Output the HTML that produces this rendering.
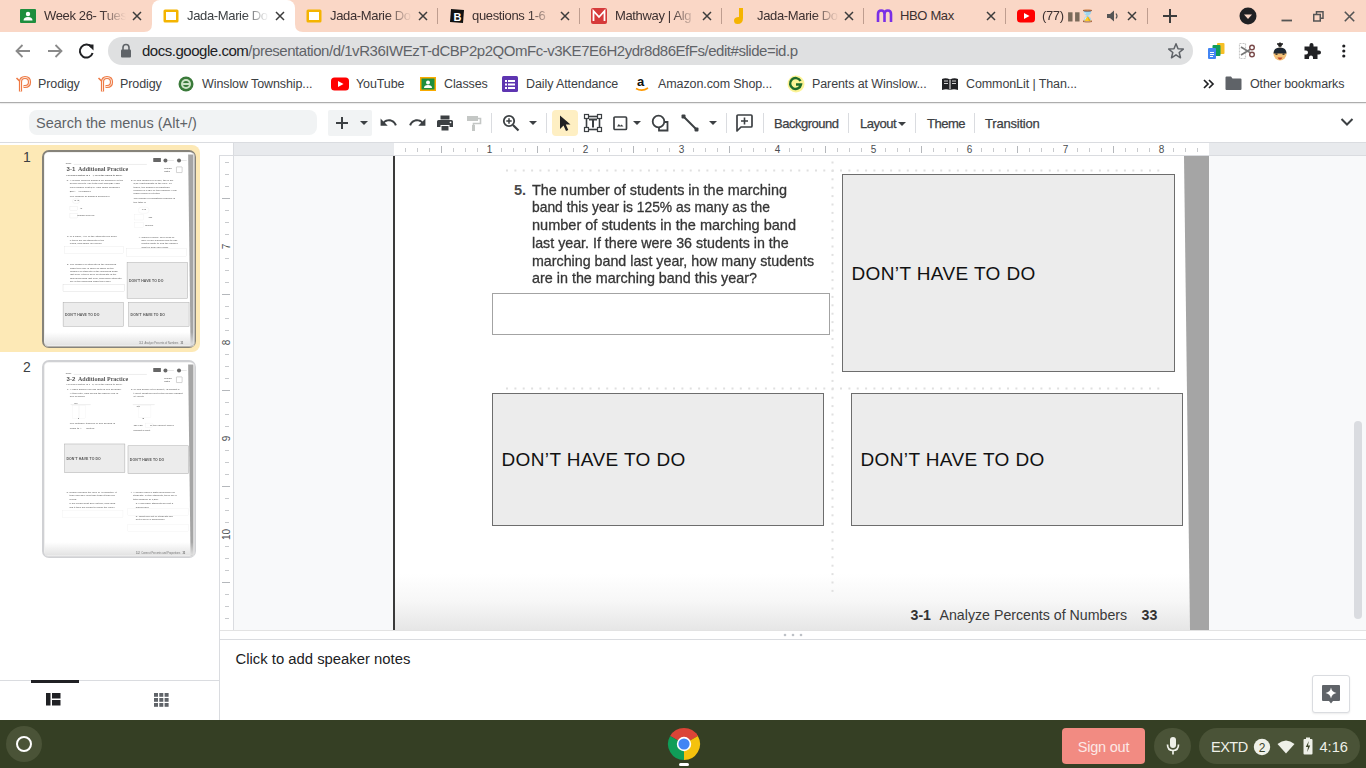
<!DOCTYPE html>
<html><head><meta charset="utf-8">
<style>
*{box-sizing:border-box;margin:0;padding:0}
html,body{width:1366px;height:768px;overflow:hidden;background:#fff;font-family:"Liberation Sans",sans-serif;position:relative}
.a{position:absolute}
svg{position:absolute;overflow:visible}
/* tab strip */
#tabs{left:0;top:0;width:1366px;height:32px;background:#fad7c6}
.tab{position:absolute;top:0;height:32px;width:143px}
.tab .t{position:absolute;left:35px;top:8px;font-size:13px;color:#3c3030;white-space:nowrap;width:82px;overflow:hidden;letter-spacing:-0.35px;
 -webkit-mask-image:linear-gradient(90deg,#000 70%,rgba(0,0,0,.35) 88%,transparent 100%)}
.tab .x{position:absolute;left:121px;top:10px;width:12px;height:12px}
.sep{position:absolute;top:10px;width:1px;height:18px;background:#8d6e63;opacity:.55}
#atab{left:152px;top:0;width:143px;height:32px;background:#fff;border-radius:8px 8px 0 0}
/* toolbar */
#omni{left:108px;top:37px;width:1085px;height:28px;border-radius:14px;background:#dfe0e1}
#url{left:142px;top:42px;font-size:15px;color:#5f6368;white-space:nowrap;letter-spacing:-0.47px}
#url b{font-weight:normal;color:#202124}
.bm{position:absolute;top:77px;font-size:12.5px;color:#3c4043;white-space:nowrap;letter-spacing:-0.1px}
#bmline{left:0;top:102px;width:1366px;height:1px;background:#adadad;box-shadow:0 1px 1px #e8e8e8}
/* docs toolbar */
#search{left:29px;top:110px;width:288px;height:25px;border-radius:8px;background:#f1f3f4}
#searcht{left:36px;top:115px;font-size:14.5px;color:#5f6368;white-space:nowrap}
.tbt{position:absolute;top:116px;font-size:13px;color:#3c4043;letter-spacing:-0.5px;white-space:nowrap;-webkit-text-stroke:0.25px #3c4043}
.vs{position:absolute;top:113px;width:1px;height:20px;background:#dadce0}
#tbline{left:0;top:142px;width:1366px;height:1px;background:#dadce0}
/* filmstrip */
#film{left:0;top:143px;width:219px;height:577px;background:#fff}
#filmr{left:219px;top:143px;width:1px;height:577px;background:#dadce0}
#hl{left:0;top:145px;width:200px;height:207px;background:#fde9b6;border-radius:0 8px 8px 0}
.num{position:absolute;font-size:14px;color:#3c4043}
.thumb{position:absolute;left:42px;width:154px;background:#fff;border-radius:5px;overflow:hidden}
/* canvas */
#canvas{left:220px;top:143px;width:1146px;height:488px;background:#f8f9fa}
#hruler{left:234px;top:143px;width:1132px;height:13px;background:#e8eaed;border-bottom:1px solid #dadce0}
#vruler{left:219px;top:156px;width:15px;height:475px;background:#fff;border-right:1px solid #dadce0;border-left:1px solid #dadce0}
#slide{left:394px;top:156px;width:815px;height:474px;background:#fff;overflow:hidden}
#notesline{left:220px;top:639px;width:1146px;height:1px;background:#dadce0}
#notes{left:235.5px;top:651px;font-size:14.85px;color:#202124;white-space:nowrap}
#shelf{left:0;top:720px;width:1366px;height:48px;background:#353f24}
.dhtd{position:absolute;background:#ececec;border:1.5px solid #6d6d6d;font-size:19px;color:#111;white-space:nowrap}
.dhtd span{position:absolute;left:8.5px;top:50%;transform:translateY(-50%);letter-spacing:0.38px}
.sl{font-size:14.6px;color:#363636;-webkit-text-stroke:0.3px #363636;white-space:nowrap;line-height:16px;transform-origin:left top}
.pf{font-family:"Liberation Sans",sans-serif;color:#333}
</style></head>
<body>
<!-- TAB STRIP -->
<div id="tabs" class="a"></div>
<div id="atab" class="a"></div>
<svg style="left:144px;top:24px" width="8" height="8"><path d="M0 8 Q8 8 8 0 L8 8 Z" fill="#fff"/></svg>
<svg style="left:295px;top:24px" width="8" height="8"><path d="M8 8 Q0 8 0 0 L0 8 Z" fill="#fff"/></svg>
<!-- tab1 classroom -->
<div class="tab" style="left:9px">
 <svg style="left:11px;top:9px" width="16" height="14"><rect x="0" y="0" width="16" height="14" rx="1" fill="#1e8e3e"/><circle cx="8" cy="5" r="2.2" fill="#fff"/><path d="M3.5 11.5 Q3.5 8 8 8 Q12.5 8 12.5 11.5Z" fill="#fff"/></svg>
 <div class="t">Week 26- Tues</div>
 <svg class="x" style="left:122px;top:10px" width="12" height="12"><path d="M2 2L10 10M10 2L2 10" stroke="#3c3c3c" stroke-width="1.5"/></svg>
</div>
<!-- tab2 active slides -->
<div class="tab" style="left:152px">
 <svg style="left:11px;top:8px" width="16" height="16"><rect x="0.5" y="1.5" width="15" height="13" rx="1.5" fill="#f4b400"/><rect x="3" y="4" width="10" height="8" fill="#fff"/></svg>
 <div class="t" style="color:#3c4043">Jada-Marie Do</div>
 <svg class="x" style="left:122px;top:10px" width="12" height="12"><path d="M2 2L10 10M10 2L2 10" stroke="#3c3c3c" stroke-width="1.5"/></svg>
</div>
<div class="tab" style="left:295px">
 <svg style="left:11px;top:8px" width="16" height="16"><rect x="0.5" y="1.5" width="15" height="13" rx="1.5" fill="#f4b400"/><rect x="3" y="4" width="10" height="8" fill="#fff"/></svg>
 <div class="t">Jada-Marie Do</div>
 <svg class="x" style="left:122px;top:10px" width="12" height="12"><path d="M2 2L10 10M10 2L2 10" stroke="#3c3c3c" stroke-width="1.5"/></svg>
</div>
<div class="sep" style="left:437px;top:8px;height:16px"></div>
<div class="tab" style="left:437px">
 <svg style="left:12px;top:8px" width="16" height="16"><path d="M2 1 L15 2 L14 15 L1 14Z" fill="#111"/><text x="4.5" y="12.5" font-family="Liberation Sans" font-weight="bold" font-size="11" fill="#fff">B</text></svg>
 <div class="t">questions 1-6</div>
 <svg class="x" style="left:122px;top:10px" width="12" height="12"><path d="M2 2L10 10M10 2L2 10" stroke="#3c3c3c" stroke-width="1.5"/></svg>
</div>
<div class="sep" style="left:579px;top:8px;height:16px"></div>
<div class="tab" style="left:580px">
 <svg style="left:11px;top:8px" width="16" height="16"><rect x="0" y="0" width="16" height="16" rx="2" fill="#d63a3a"/><path d="M2.5 13 L2.5 3 L8 9 L13.5 3 L13.5 13" stroke="#fff" stroke-width="1.8" fill="none"/></svg>
 <div class="t">Mathway | Alg</div>
 <svg class="x" style="left:121px;top:10px" width="12" height="12"><path d="M2 2L10 10M10 2L2 10" stroke="#3c3c3c" stroke-width="1.5"/></svg>
</div>
<div class="sep" style="left:721px;top:8px;height:16px"></div>
<div class="tab" style="left:722px">
 <svg style="left:11px;top:7px" width="16" height="18"><path d="M6 1 L10 1 L10 11 Q10 17 4.5 17 Q1 17 1 13.5 Q1 10 6 10 Z" fill="#f5b400"/></svg>
 <div class="t">Jada-Marie Do</div>
 <svg class="x" style="left:121px;top:10px" width="12" height="12"><path d="M2 2L10 10M10 2L2 10" stroke="#3c3c3c" stroke-width="1.5"/></svg>
</div>
<div class="sep" style="left:863px;top:8px;height:16px"></div>
<div class="tab" style="left:865px">
 <svg style="left:11px;top:9px" width="18" height="14"><path d="M2 13 L2 5 Q2 1.5 5.2 1.5 Q8.5 1.5 8.5 5 L8.5 13 M8.5 5 Q8.5 1.5 11.8 1.5 Q15 1.5 15 5 L15 13" stroke="#7a2fe6" stroke-width="2.6" fill="none"/></svg>
 <div class="t" style="-webkit-mask-image:none">HBO Max</div>
 <svg class="x" style="left:120px;top:10px" width="12" height="12"><path d="M2 2L10 10M10 2L2 10" stroke="#3c3c3c" stroke-width="1.5"/></svg>
</div>
<div class="sep" style="left:1005px;top:8px;height:16px"></div>
<div class="tab" style="left:1007px">
 <svg style="left:10px;top:9px" width="18" height="14"><rect x="0" y="0.5" width="18" height="13" rx="3.5" fill="#f00"/><path d="M7 4 L12.5 7 L7 10Z" fill="#fff"/></svg>
 <div class="t" style="width:70px">(77) <span style="font-size:12px;color:#7a6a5a">&#9646;&#9646;&#8987;</span></div>
 <svg style="left:99px;top:10px" width="14" height="12"><path d="M1 4 L4 4 L8 0.5 L8 11.5 L4 8 L1 8Z" fill="#555"/><path d="M10 3.5 Q12 6 10 8.5" stroke="#555" stroke-width="1.2" fill="none"/></svg>
 <svg class="x" style="left:119px;top:10px" width="12" height="12"><path d="M2 2L10 10M10 2L2 10" stroke="#3c3c3c" stroke-width="1.5"/></svg>
</div>
<div class="sep" style="left:1147px;top:8px;height:16px"></div>
<svg style="left:1162px;top:8px" width="16" height="16"><path d="M8 1 L8 15 M1 8 L15 8" stroke="#3c3c3c" stroke-width="2"/></svg>
<svg style="left:1239px;top:7px" width="18" height="18"><circle cx="9" cy="9" r="8.5" fill="#202124"/><path d="M5 7.5 L13 7.5 L9 12Z" fill="#fad7c6"/></svg>
<svg style="left:1281px;top:8px" width="12" height="16"><path d="M0.5 12.5 L11 12.5" stroke="#555" stroke-width="1.8"/></svg>
<svg style="left:1313px;top:11px" width="11" height="11"><rect x="3.5" y="0.75" width="6.5" height="6.5" stroke="#555" stroke-width="1.5" fill="none"/><rect x="0.75" y="3.5" width="6.5" height="6.5" stroke="#555" stroke-width="1.5" fill="#fad7c6"/></svg>
<svg style="left:1344px;top:11px" width="11" height="11"><path d="M0.8 0.8L10.2 10.2M10.2 0.8L0.8 10.2" stroke="#555" stroke-width="1.6"/></svg>

<!-- address -->
<div id="omni" class="a"></div>
<div id="url" class="a"><b>docs.google.com</b>/presentation/d/1vR36IWEzT-dCBP2p2QOmFc-v3KE7E6H2ydr8d86EfFs/edit#slide=id.p</div>
<div id="bmline" class="a"></div>
<!-- NAV -->
<svg style="left:14px;top:42px" width="18" height="18"><path d="M16 9 L2.5 9 M8.5 3 L2.5 9 L8.5 15" stroke="#8a8a8a" stroke-width="1.8" fill="none"/></svg>
<svg style="left:46px;top:42px" width="18" height="18"><path d="M2 9 L15.5 9 M9.5 3 L15.5 9 L9.5 15" stroke="#8a8a8a" stroke-width="1.8" fill="none"/></svg>
<svg style="left:78px;top:43px" width="17" height="17"><path d="M13.6 4.2 A6.5 6.5 0 1 0 14.6 10" stroke="#202124" stroke-width="2" fill="none"/><path d="M9.5 1.5 L15.5 1.5 L15.5 7.5Z" fill="#202124"/></svg>
<svg style="left:120px;top:43px" width="12" height="15"><path d="M3 7 L3 4.5 Q3 1.5 6 1.5 Q9 1.5 9 4.5 L9 7" stroke="#5f6368" stroke-width="1.6" fill="none"/><rect x="1" y="6.5" width="10" height="8" rx="1" fill="#5f6368"/></svg>
<svg style="left:1167px;top:42px" width="18" height="18"><path d="M9 1.8 L11 6.8 L16.3 7.1 L12.2 10.5 L13.5 15.8 L9 12.8 L4.5 15.8 L5.8 10.5 L1.7 7.1 L7 6.8Z" stroke="#5f6368" stroke-width="1.5" fill="none" stroke-linejoin="round"/></svg>
<!-- extensions -->
<svg style="left:1206px;top:41px" width="20" height="20"><rect x="11" y="2" width="7.5" height="11" rx="1" fill="#f6bf26"/><rect x="6.5" y="4" width="8" height="11" rx="1" fill="#0f9d58"/><rect x="2" y="7" width="8" height="11" rx="1" fill="#4285f4"/><path d="M4 11.5h4M4 13.5h4M4 15.5h3" stroke="#fff" stroke-width="1"/></svg>
<svg style="left:1238px;top:42px" width="18" height="18"><rect x="1.5" y="1.5" width="6" height="15" fill="none" stroke="#c8c8c8" stroke-width="1.2" stroke-dasharray="2 1"/><path d="M3 5 L12 10.5 M3 13 L12 7.5" stroke="#777" stroke-width="1.6"/><circle cx="14" cy="5.5" r="2.3" fill="none" stroke="#7a4a4a" stroke-width="1.4"/><circle cx="14" cy="12.5" r="2.3" fill="none" stroke="#7a4a4a" stroke-width="1.4"/></svg>
<svg style="left:1271px;top:41px" width="18" height="20"><path d="M6 3 L12 3 M9 1.5 L9 5" stroke="#222" stroke-width="1.6"/><circle cx="9" cy="4" r="2" fill="#222"/><circle cx="9" cy="13" r="6.5" fill="#f2c078"/><path d="M2.5 12.5 Q2.5 6.5 9 6.5 Q15.5 6.5 15.5 12.5Z" fill="#1d2733"/><rect x="4.5" y="12.5" width="2" height="1.3" fill="#222"/><rect x="11.5" y="12.5" width="2" height="1.3" fill="#222"/><path d="M6.5 16.5 L11.5 16.5 L10 18.5 L8 18.5Z" fill="#c0452a"/></svg>
<svg style="left:1303px;top:42px" width="18" height="18"><path d="M6.5 3 Q6.5 1 8.5 1 Q10.5 1 10.5 3 L10.5 4.5 L14.5 4.5 L14.5 8.5 L16 8.5 Q18 8.5 18 10.5 Q18 12.5 16 12.5 L14.5 12.5 L14.5 17 L10 17 L10 15.5 Q10 13.5 8 13.5 Q6 13.5 6 15.5 L6 17 L1.5 17 L1.5 12.5 L3 12.5 Q5 12.5 5 10.5 Q5 8.5 3 8.5 L1.5 8.5 L1.5 4.5 L6.5 4.5Z" fill="#202124"/></svg>
<svg style="left:1340px;top:43px" width="8" height="18"><circle cx="3.8" cy="3" r="1.6" fill="#202124"/><circle cx="3.8" cy="8" r="1.6" fill="#202124"/><circle cx="3.8" cy="13" r="1.6" fill="#202124"/></svg>
<!-- BOOKMARKS -->
<svg style="left:14px;top:75px" width="18" height="18"><path d="M2.5 3 L6 6.5" stroke="#ee7a45" stroke-width="1.6"/><path d="M6.5 16.5 L6.5 7 Q6.5 2.5 11 2.5 Q15.5 2.5 15.5 7 Q15.5 11.5 11 11.5 L9.5 11.5" stroke="#ee7a45" stroke-width="3.2" fill="none"/><path d="M6.5 16.5 L6.5 7 Q6.5 2.5 11 2.5 Q15.5 2.5 15.5 7 Q15.5 11.5 11 11.5 L9.5 11.5" stroke="#fde8dc" stroke-width="1" fill="none"/></svg>
<div class="bm" style="left:38px">Prodigy</div>
<svg style="left:96px;top:75px" width="18" height="18"><path d="M2.5 3 L6 6.5" stroke="#ee7a45" stroke-width="1.6"/><path d="M6.5 16.5 L6.5 7 Q6.5 2.5 11 2.5 Q15.5 2.5 15.5 7 Q15.5 11.5 11 11.5 L9.5 11.5" stroke="#ee7a45" stroke-width="3.2" fill="none"/><path d="M6.5 16.5 L6.5 7 Q6.5 2.5 11 2.5 Q15.5 2.5 15.5 7 Q15.5 11.5 11 11.5 L9.5 11.5" stroke="#fde8dc" stroke-width="1" fill="none"/></svg>
<div class="bm" style="left:120px">Prodigy</div>
<svg style="left:178px;top:76px" width="16" height="16"><circle cx="8" cy="8" r="7.5" fill="#3a7a3a"/><circle cx="8" cy="8" r="5" fill="#cfe3c8"/><circle cx="8" cy="8" r="3" fill="#3a7a3a"/><rect x="4" y="7" width="8" height="2" fill="#cfe3c8"/></svg>
<div class="bm" style="left:202px">Winslow Township...</div>
<svg style="left:331px;top:77px" width="18" height="14"><rect x="0" y="0.5" width="18" height="13" rx="3.5" fill="#f00"/><path d="M7 4 L12.5 7 L7 10Z" fill="#fff"/></svg>
<div class="bm" style="left:356px">YouTube</div>
<svg style="left:420px;top:77px" width="16" height="14"><rect x="0" y="0" width="16" height="14" fill="#f9ab00"/><rect x="1.5" y="1.5" width="13" height="11" fill="#1e8e3e"/><circle cx="8" cy="5.5" r="2" fill="#fff"/><path d="M4 11 Q4 8 8 8 Q12 8 12 11Z" fill="#fff"/></svg>
<div class="bm" style="left:444px">Classes</div>
<svg style="left:502px;top:76px" width="16" height="16"><rect x="0" y="0" width="16" height="16" rx="1.5" fill="#5e35b1"/><rect x="3" y="4" width="2" height="2" fill="#fff"/><rect x="6" y="4" width="7" height="2" fill="#fff"/><rect x="3" y="7.5" width="2" height="2" fill="#fff"/><rect x="6" y="7.5" width="7" height="2" fill="#fff"/><rect x="3" y="11" width="2" height="2" fill="#fff"/><rect x="6" y="11" width="7" height="2" fill="#fff"/></svg>
<div class="bm" style="left:526px">Daily Attendance</div>
<svg style="left:634px;top:75px" width="16" height="18"><text x="3" y="11" font-family="Liberation Sans" font-weight="bold" font-size="13" fill="#111">a</text><path d="M2 13.5 Q8 17 14 13" stroke="#f90" stroke-width="1.6" fill="none"/></svg>
<div class="bm" style="left:658px">Amazon.com Shop...</div>
<svg style="left:787px;top:75px" width="18" height="18"><circle cx="9" cy="9" r="8.5" fill="#fbf07a" opacity=".8"/><path d="M13.5 6 A5.5 5.5 0 1 0 14 9.5 L9 9.5" stroke="#1e6b2a" stroke-width="2.4" fill="none"/></svg>
<div class="bm" style="left:812px">Parents at Winslow...</div>
<svg style="left:941px;top:77px" width="18" height="14"><path d="M1 2 Q5 0.5 9 2.5 Q13 0.5 17 2 L17 13 Q13 11.5 9 13 Q5 11.5 1 13Z" fill="#202124"/><path d="M9 3 L9 12.5" stroke="#fff" stroke-width="1"/><path d="M3 4 L7 4 M3 6.5 L7 6.5 M11 4 L15 4 M11 6.5 L15 6.5" stroke="#fff" stroke-width=".8"/></svg>
<div class="bm" style="left:966px">CommonLit | Than...</div>
<svg style="left:1203px;top:79px" width="12" height="10"><path d="M1 1 L5 5 L1 9 M6 1 L10 5 L6 9" stroke="#202124" stroke-width="1.7" fill="none"/></svg>
<svg style="left:1225px;top:76px" width="17" height="14"><path d="M0.5 1.5 Q0.5 0.5 1.5 0.5 L6 0.5 L7.5 2.5 L15.5 2.5 Q16.5 2.5 16.5 3.5 L16.5 13 Q16.5 14 15.5 14 L1.5 14 Q0.5 14 0.5 13Z" fill="#5f6368"/></svg>
<div class="bm" style="left:1250px">Other bookmarks</div>

<!-- docs toolbar -->
<div id="search" class="a"></div>
<div id="searcht" class="a">Search the menus (Alt+/)</div>
<div id="tbline" class="a"></div>
<!-- DOCS TOOLBAR -->
<div class="a" style="left:328px;top:110px;width:44px;height:26px;background:#f1f3f4;border-radius:2px"></div>
<svg style="left:335px;top:116px" width="14" height="14"><path d="M7 1 L7 13 M1 7 L13 7" stroke="#3c4043" stroke-width="2"/></svg>
<svg style="left:360px;top:121px" width="8" height="5"><path d="M0 0 L8 0 L4 4Z" fill="#3c4043"/></svg>
<svg style="left:378.8px;top:112.6px;width:19px;height:19px" viewBox="0 0 24 24"><path d="M12.5 8c-2.65 0-5.050.99-6.9 2.6L2 7v9h9l-3.62-3.620c1.39-1.160 3.16-1.880 5.12-1.880 3.54 0 6.550 2.310 7.6 5.5l2.37-.78C21.080 11.030 17.150 8 12.5 8z" fill="#3c4043"/></svg>
<svg style="left:408.2px;top:112.6px;width:19px;height:19px" viewBox="0 0 24 24"><path d="M18.4 10.6C16.55 8.99 14.15 8 11.5 8c-4.65 0-8.58 3.03-9.96 7.22L3.9 16c1.05-3.19 4.05-5.5 7.6-5.5 1.95 0 3.73.72 5.12 1.88L13 16h9V7l-3.6 3.6z" fill="#3c4043"/></svg>
<svg style="left:436px;top:114px" width="18" height="18"><rect x="4.5" y="1.5" width="9" height="4" fill="#3c4043"/><path d="M1 7.5 Q1 6 2.5 6 L15.5 6 Q17 6 17 7.5 L17 13 L13.5 13 L13.5 11 L4.5 11 L4.5 13 L1 13Z" fill="#3c4043"/><rect x="5.5" y="12" width="7" height="4.5" fill="#3c4043"/><circle cx="14.5" cy="8.3" r=".9" fill="#fff"/></svg>
<svg style="left:466px;top:115px" width="16" height="17"><rect x="1" y="1" width="11" height="5" fill="#c4c7c5"/><path d="M12 3.5 L14.5 3.5 L14.5 8.5 L7.5 8.5 L7.5 10" stroke="#c4c7c5" stroke-width="1.6" fill="none"/><rect x="6" y="10" width="3" height="6" fill="#c4c7c5"/></svg>
<div class="vs" style="left:491px"></div>
<svg style="left:502px;top:114px" width="18" height="18"><circle cx="7" cy="7" r="5.2" stroke="#3c4043" stroke-width="1.8" fill="none"/><path d="M11 11 L16.5 16.5" stroke="#3c4043" stroke-width="2.2"/><path d="M7 4.3 L7 9.7 M4.3 7 L9.7 7" stroke="#3c4043" stroke-width="1.5"/></svg>
<svg style="left:529px;top:121px" width="8" height="5"><path d="M0 0 L8 0 L4 4Z" fill="#3c4043"/></svg>
<div class="vs" style="left:546px"></div>
<div class="a" style="left:552px;top:110px;width:26px;height:26px;background:#feefc3;border-radius:4px"></div>
<svg style="left:558px;top:114px" width="14" height="18"><path d="M2 1.5 L2 15 L5.5 11.5 L8 17 L10.3 16 L7.8 10.5 L12.5 10.5Z" fill="#202124"/></svg>
<svg style="left:584px;top:114px" width="18" height="18"><rect x="2.5" y="2.5" width="13" height="13" stroke="#3c4043" stroke-width="1.6" fill="none"/><rect x="0.5" y="0.5" width="4" height="4" fill="#fff" stroke="#3c4043" stroke-width="1.2"/><rect x="13.5" y="0.5" width="4" height="4" fill="#fff" stroke="#3c4043" stroke-width="1.2"/><rect x="0.5" y="13.5" width="4" height="4" fill="#fff" stroke="#3c4043" stroke-width="1.2"/><rect x="13.5" y="13.5" width="4" height="4" fill="#fff" stroke="#3c4043" stroke-width="1.2"/><path d="M5 5.5 L13 5.5 M9 5.5 L9 13.5" stroke="#3c4043" stroke-width="2"/></svg>
<svg style="left:613px;top:116px" width="15" height="15"><rect x="1" y="1" width="12.5" height="12.5" rx="1" stroke="#3c4043" stroke-width="1.7" fill="none"/><path d="M4 10.5 L5.8 8 L7.3 9.8 L8.5 8.5 L10.5 10.5Z" fill="#3c4043"/></svg>
<svg style="left:633px;top:121px" width="8" height="5"><path d="M0 0 L8 0 L4 4Z" fill="#3c4043"/></svg>
<svg style="left:651px;top:114px" width="18" height="18"><circle cx="7.5" cy="7.5" r="5.8" stroke="#3c4043" stroke-width="1.8" fill="none"/><path d="M13.5 8 L16.5 8 L16.5 16.5 L8 16.5 L8 13.5" stroke="#3c4043" stroke-width="1.8" fill="none"/></svg>
<svg style="left:681px;top:114px" width="18" height="18"><path d="M3 3 L15 15" stroke="#3c4043" stroke-width="2"/><rect x="0.5" y="0.5" width="4" height="4" rx="1" fill="#3c4043"/><rect x="13.5" y="13.5" width="4" height="4" rx="1" fill="#3c4043"/></svg>
<svg style="left:709px;top:121px" width="8" height="5"><path d="M0 0 L8 0 L4 4Z" fill="#3c4043"/></svg>
<div class="vs" style="left:726px"></div>
<svg style="left:736px;top:114px" width="17" height="18"><path d="M1 2 Q1 1 2 1 L15 1 Q16 1 16 2 L16 12 Q16 13 15 13 L5 13 L1 17Z" stroke="#3c4043" stroke-width="1.7" fill="none" stroke-linejoin="round"/><path d="M8.5 3.5 L8.5 10.5 M5 7 L12 7" stroke="#3c4043" stroke-width="1.6"/></svg>
<div class="vs" style="left:763px"></div>
<div class="tbt" style="left:774px">Background</div>
<div class="vs" style="left:848px"></div>
<div class="tbt" style="left:860px">Layout</div>
<svg style="left:898px;top:122px" width="8" height="5"><path d="M0 0 L8 0 L4 4Z" fill="#3c4043"/></svg>
<div class="vs" style="left:915px"></div>
<div class="tbt" style="left:927px">Theme</div>
<div class="vs" style="left:974px"></div>
<div class="tbt" style="left:985px;letter-spacing:-0.2px">Transition</div>
<svg style="left:1340px;top:117px" width="14" height="10"><path d="M1.5 2 L7 7.5 L12.5 2" stroke="#3c4043" stroke-width="2" fill="none"/></svg>

<!-- filmstrip -->
<div id="film" class="a"></div>
<div id="filmr" class="a"></div>
<div id="hl" class="a"></div>
<!-- THUMBS -->
<div class="num" style="left:23px;top:149px">1</div>
<div class="num" style="left:23px;top:359px">2</div>
<div class="a" style="left:41.5px;top:150px;width:154.5px;height:198px;border:2px solid #86837a;border-radius:7px;background:#fff"></div><div class="a" style="left:45px;top:152.5px;width:149px;height:193px;overflow:hidden;border-radius:3px;box-shadow:0 0 0 0.6px #e6e6e6;filter:blur(0.25px)"><div style="position:absolute;left:0;top:0;width:815px;height:1054px;background:#fff;transform:scale(0.18282);transform-origin:0 0;font-family:'Liberation Sans'"><div style="position:absolute;left:114px;top:50.4px;font-size:11px;line-height:11px;color:#777;white-space:nowrap;font-weight:bold;">Name</div><div style="position:absolute;left:157px;top:60px;width:400px;height:1.5px;background:#ccc"></div><div style="position:absolute;left:592px;top:27px;width:42px;height:22px;background:#666;border-radius:2px"></div><div style="position:absolute;left:648px;top:30px;width:22px;height:22px;background:#666;border-radius:11px"></div><div style="position:absolute;left:670px;top:40px;width:35px;height:2px;background:#bbb"></div><div style="position:absolute;left:722px;top:30px;width:22px;height:22px;background:#666;border-radius:11px"></div><div style="position:absolute;left:745px;top:40px;width:30px;height:2px;background:#bbb"></div><div style="position:absolute;left:118px;top:72px;font-size:33px;line-height:34px;color:#555;font-weight:bold;white-space:nowrap;font-family:'Liberation Serif'"><b style="font-family:'Liberation Sans'">3-1</b>&nbsp; Additional Practice</div><div style="position:absolute;left:652px;top:81.4px;font-size:11px;line-height:11px;color:#666;white-space:nowrap;font-weight:bold;">Teacher</div><div style="position:absolute;left:652px;top:93.4px;font-size:11px;line-height:11px;color:#666;white-space:nowrap;font-weight:bold;">Notes</div><div style="position:absolute;left:718px;top:75px;width:33px;height:33px;border:2px solid #888;border-radius:3px;box-sizing:border-box"></div><div style="position:absolute;left:118px;top:116.2px;font-size:13px;line-height:13px;color:#555;white-space:nowrap;font-weight:bold;">Leveled Practice In 1 - 4, fill in the boxes to solve.</div><div style="position:absolute;left:118px;top:141.9px;font-size:13.5px;line-height:13.5px;color:#555;white-space:nowrap;font-weight:bold;">1.</div><div style="position:absolute;left:136px;top:141.9px;font-size:13.5px;line-height:13.5px;color:#7c7c7c;white-space:nowrap;font-weight:bold;">A school ordered plaques for members of the</div><div style="position:absolute;left:136px;top:159.9px;font-size:13.5px;line-height:13.5px;color:#7c7c7c;white-space:nowrap;font-weight:bold;">honor society. The total cost was $874 and</div><div style="position:absolute;left:136px;top:177.9px;font-size:13.5px;line-height:13.5px;color:#7c7c7c;white-space:nowrap;font-weight:bold;">each plaque cost $46. How many plaques?</div><div style="position:absolute;left:136px;top:204.9px;font-size:13.5px;line-height:13.5px;color:#7c7c7c;white-space:nowrap;font-weight:bold;">$874 ÷ 46 plaques</div><div style="position:absolute;left:136px;top:230.5px;font-size:13.5px;line-height:13.5px;color:#7c7c7c;white-space:nowrap;font-weight:bold;">The number of plaques ordered is</div><div style="position:absolute;left:150px;top:250px;width:40px;height:26px;border:1.5px solid #ccc;border-radius:13px"></div><div style="position:absolute;left:161px;top:254.8px;font-size:12px;line-height:12px;color:#7c7c7c;white-space:nowrap;font-weight:bold;">is 46</div><div style="position:absolute;left:136px;top:290px;width:40px;height:26px;border:1.5px solid #ccc"></div><div style="position:absolute;left:183px;top:294.8px;font-size:12px;line-height:12px;color:#7c7c7c;white-space:nowrap;font-weight:bold;">÷46</div><div style="position:absolute;left:136px;top:330px;width:40px;height:26px;border:1.5px solid #ccc"></div><div style="position:absolute;left:176px;top:333.8px;font-size:12px;line-height:12px;color:#7c7c7c;white-space:nowrap;font-weight:bold;">plaques ordered</div><div style="position:absolute;left:470px;top:141.9px;font-size:13.5px;line-height:13.5px;color:#7c7c7c;white-space:nowrap;font-weight:bold;">2.</div><div style="position:absolute;left:484px;top:141.9px;font-size:13.5px;line-height:13.5px;color:#7c7c7c;white-space:nowrap;font-weight:bold;">Of 360 runners in a race, there are</div><div style="position:absolute;left:484px;top:159.9px;font-size:13.5px;line-height:13.5px;color:#7c7c7c;white-space:nowrap;font-weight:bold;">2,394 participants in the race. Of</div><div style="position:absolute;left:484px;top:177.9px;font-size:13.5px;line-height:13.5px;color:#7c7c7c;white-space:nowrap;font-weight:bold;">those, the number of marathon</div><div style="position:absolute;left:484px;top:195.9px;font-size:13.5px;line-height:13.5px;color:#7c7c7c;white-space:nowrap;font-weight:bold;">runners is 175% of this number. How</div><div style="position:absolute;left:484px;top:213.9px;font-size:13.5px;line-height:13.5px;color:#7c7c7c;white-space:nowrap;font-weight:bold;">many runners in total?</div><div style="position:absolute;left:484px;top:240.9px;font-size:13.5px;line-height:13.5px;color:#7c7c7c;white-space:nowrap;font-weight:bold;">The number of marathon runners is</div><div style="position:absolute;left:484px;top:259.9px;font-size:13.5px;line-height:13.5px;color:#7c7c7c;white-space:nowrap;font-weight:bold;">the total is</div><div style="position:absolute;left:510px;top:296px;width:60px;height:34px;border:1.5px solid #ddd;border-radius:17px"></div><div style="position:absolute;left:529px;top:299.8px;font-size:12px;line-height:12px;color:#7c7c7c;white-space:nowrap;font-weight:bold;">1.75</div><div style="position:absolute;left:490px;top:335px;width:50px;height:32px;border:1.5px solid #ddd"></div><div style="position:absolute;left:566px;top:344.8px;font-size:12px;line-height:12px;color:#7c7c7c;white-space:nowrap;font-weight:bold;">360</div><div style="position:absolute;left:490px;top:378px;width:50px;height:28px;border:1.5px solid #ddd"></div><div style="position:absolute;left:547px;top:388.8px;font-size:12px;line-height:12px;color:#7c7c7c;white-space:nowrap;font-weight:bold;">runners</div><div style="position:absolute;left:120px;top:450.9px;font-size:13.5px;line-height:13.5px;color:#7c7c7c;white-space:nowrap;font-weight:bold;">3.</div><div style="position:absolute;left:136px;top:450.9px;font-size:13.5px;line-height:13.5px;color:#7c7c7c;white-space:nowrap;font-weight:bold;">In a class, 44% of the students are boys.</div><div style="position:absolute;left:136px;top:469.9px;font-size:13.5px;line-height:13.5px;color:#7c7c7c;white-space:nowrap;font-weight:bold;">If there are 25 students in the</div><div style="position:absolute;left:136px;top:487.9px;font-size:13.5px;line-height:13.5px;color:#7c7c7c;white-space:nowrap;font-weight:bold;">class, how many are boys?</div><div style="position:absolute;left:106px;top:510px;width:325px;height:40px;background:#fff;border:1.5px solid #ccc;box-sizing:border-box"></div><div style="position:absolute;left:512px;top:451.9px;font-size:13.5px;line-height:13.5px;color:#7c7c7c;white-space:nowrap;font-weight:bold;">4.</div><div style="position:absolute;left:528px;top:451.9px;font-size:13.5px;line-height:13.5px;color:#7c7c7c;white-space:nowrap;font-weight:bold;">Which is more: 30% of 80 or</div><div style="position:absolute;left:528px;top:469.9px;font-size:13.5px;line-height:13.5px;color:#7c7c7c;white-space:nowrap;font-weight:bold;">80% of 30? Explain how to use</div><div style="position:absolute;left:528px;top:488.9px;font-size:13.5px;line-height:13.5px;color:#7c7c7c;white-space:nowrap;font-weight:bold;">mental math to find the answer</div><div style="position:absolute;left:528px;top:506.9px;font-size:13.5px;line-height:13.5px;color:#7c7c7c;white-space:nowrap;font-weight:bold;">and tell how you know.</div><div style="position:absolute;left:447px;top:521px;width:329px;height:46px;background:#fff;border:1.5px solid #ccc;box-sizing:border-box"></div><div style="position:absolute;left:120px;top:604.1px;font-size:13.2px;line-height:13.2px;color:#7c7c7c;white-space:nowrap;font-weight:bold;">5.</div><div style="position:absolute;left:137px;top:604.1px;font-size:13.2px;line-height:13.2px;color:#7c7c7c;white-space:nowrap;font-weight:bold;">The number of students in the marching</div><div style="position:absolute;left:137px;top:622.1px;font-size:13.2px;line-height:13.2px;color:#7c7c7c;white-space:nowrap;font-weight:bold;">band this year is 125% as many as the</div><div style="position:absolute;left:137px;top:640.1px;font-size:13.2px;line-height:13.2px;color:#7c7c7c;white-space:nowrap;font-weight:bold;">number of students in the marching band</div><div style="position:absolute;left:137px;top:658.1px;font-size:13.2px;line-height:13.2px;color:#7c7c7c;white-space:nowrap;font-weight:bold;">last year. If there were 36 students in the</div><div style="position:absolute;left:137px;top:676.1px;font-size:13.2px;line-height:13.2px;color:#7c7c7c;white-space:nowrap;font-weight:bold;">marching band last year, how many students</div><div style="position:absolute;left:137px;top:694.1px;font-size:13.2px;line-height:13.2px;color:#7c7c7c;white-space:nowrap;font-weight:bold;">are in the marching band this year?</div><div style="position:absolute;left:98px;top:717px;width:338px;height:42px;background:#fff;border:1.5px solid #aaa;box-sizing:border-box"></div><div style="position:absolute;left:448px;top:598px;width:333px;height:198px;background:#ececec;border:2px solid #999;box-sizing:border-box"><div style="position:absolute;left:9px;top:88.0px;font-size:19px;line-height:22px;color:#555;white-space:nowrap;font-weight:bold;letter-spacing:0.5px">DON’T HAVE TO DO</div></div><div style="position:absolute;left:98px;top:816px;width:332px;height:133px;background:#ececec;border:2px solid #999;box-sizing:border-box"><div style="position:absolute;left:9px;top:55.5px;font-size:19px;line-height:22px;color:#555;white-space:nowrap;font-weight:bold;letter-spacing:0.5px">DON’T HAVE TO DO</div></div><div style="position:absolute;left:457px;top:816px;width:332px;height:133px;background:#ececec;border:2px solid #999;box-sizing:border-box"><div style="position:absolute;left:9px;top:55.5px;font-size:19px;line-height:22px;color:#555;white-space:nowrap;font-weight:bold;letter-spacing:0.5px">DON’T HAVE TO DO</div></div><svg style="position:absolute;left:0;top:0" width="815" height="1054"><polygon points="783,8 812,8 812,1054 796,1054" fill="#a5a5a5"/></svg><div style="position:absolute;left:0;top:980px;width:815px;height:74px;background:linear-gradient(180deg,rgba(230,230,230,0),#e2e2e2)"></div><div style="position:absolute;left:516px;top:1030px;font-size:14px;line-height:16px;color:#777;white-space:nowrap"><b>3-1</b> &nbsp;Analyze Percents of Numbers &nbsp; <b>33</b></div></div></div>
<div class="a" style="left:42px;top:360px;width:154px;height:198px;border:2px solid #d0d1d4;border-radius:7px;background:#fff"></div><div class="a" style="left:45px;top:362.5px;width:149px;height:193px;overflow:hidden;border-radius:3px;box-shadow:0 0 0 0.6px #e6e6e6;filter:blur(0.25px)"><div style="position:absolute;left:0;top:0;width:815px;height:1054px;background:#fff;transform:scale(0.18282);transform-origin:0 0;font-family:'Liberation Sans'"><div style="position:absolute;left:114px;top:50.4px;font-size:11px;line-height:11px;color:#777;white-space:nowrap;font-weight:bold;">Name</div><div style="position:absolute;left:157px;top:60px;width:400px;height:1.5px;background:#ccc"></div><div style="position:absolute;left:592px;top:27px;width:42px;height:22px;background:#666;border-radius:2px"></div><div style="position:absolute;left:648px;top:30px;width:22px;height:22px;background:#666;border-radius:11px"></div><div style="position:absolute;left:670px;top:40px;width:35px;height:2px;background:#bbb"></div><div style="position:absolute;left:722px;top:30px;width:22px;height:22px;background:#666;border-radius:11px"></div><div style="position:absolute;left:745px;top:40px;width:30px;height:2px;background:#bbb"></div><div style="position:absolute;left:118px;top:72px;font-size:33px;line-height:34px;color:#555;font-weight:bold;white-space:nowrap;font-family:'Liberation Serif'"><b style="font-family:'Liberation Sans'">3-2</b>&nbsp; Additional Practice</div><div style="position:absolute;left:652px;top:81.4px;font-size:11px;line-height:11px;color:#666;white-space:nowrap;font-weight:bold;">Teacher</div><div style="position:absolute;left:652px;top:93.4px;font-size:11px;line-height:11px;color:#666;white-space:nowrap;font-weight:bold;">Notes</div><div style="position:absolute;left:718px;top:75px;width:33px;height:33px;border:2px solid #888;border-radius:3px;box-sizing:border-box"></div><div style="position:absolute;left:118px;top:111.9px;font-size:13px;line-height:13px;color:#7c7c7c;white-space:nowrap;font-weight:bold;">Leveled Practice In 1 - 2, fill in the boxes to solve.</div><div style="position:absolute;left:120px;top:137.4px;font-size:13.5px;line-height:13.5px;color:#7c7c7c;white-space:nowrap;font-weight:bold;">1.</div><div style="position:absolute;left:136px;top:137.4px;font-size:13.5px;line-height:13.5px;color:#7c7c7c;white-space:nowrap;font-weight:bold;">A baby gazelle ran 120 meters in 8 seconds.</div><div style="position:absolute;left:136px;top:156.5px;font-size:13.5px;line-height:13.5px;color:#7c7c7c;white-space:nowrap;font-weight:bold;">At this rate, how far did the gazelle run in</div><div style="position:absolute;left:136px;top:174.9px;font-size:13.5px;line-height:13.5px;color:#7c7c7c;white-space:nowrap;font-weight:bold;">one second?</div><div style="position:absolute;left:150px;top:232px;width:70px;height:70px;border:1.5px solid #e4e4e4"></div><div style="position:absolute;left:185px;top:232px;width:1.5px;height:70px;background:#e4e4e4"></div><div style="position:absolute;left:140px;top:228px;width:110px;height:1.5px;background:#d0d0d0"></div><div style="position:absolute;left:160px;top:215.4px;font-size:11px;line-height:11px;color:#7c7c7c;white-space:nowrap;font-weight:bold;">120</div><div style="position:absolute;left:180px;top:299.4px;font-size:11px;line-height:11px;color:#7c7c7c;white-space:nowrap;font-weight:bold;">8</div><div style="position:absolute;left:136px;top:323.6px;font-size:13.5px;line-height:13.5px;color:#7c7c7c;white-space:nowrap;font-weight:bold;">The distance traveled in one second is</div><div style="position:absolute;left:136px;top:349.4px;font-size:13.5px;line-height:13.5px;color:#7c7c7c;white-space:nowrap;font-weight:bold;">equal to 4 &nbsp;&nbsp;&nbsp;&nbsp;&nbsp; meters</div><div style="position:absolute;left:470px;top:137.4px;font-size:13.5px;line-height:13.5px;color:#7c7c7c;white-space:nowrap;font-weight:bold;">2.</div><div style="position:absolute;left:484px;top:137.4px;font-size:13.5px;line-height:13.5px;color:#7c7c7c;white-space:nowrap;font-weight:bold;">Of 150 people at a concert, 48 bought a</div><div style="position:absolute;left:484px;top:156.5px;font-size:13.5px;line-height:13.5px;color:#7c7c7c;white-space:nowrap;font-weight:bold;">t-shirt. What percent of the people bought</div><div style="position:absolute;left:484px;top:174.9px;font-size:13.5px;line-height:13.5px;color:#7c7c7c;white-space:nowrap;font-weight:bold;">a t-shirt?</div><div style="position:absolute;left:510px;top:232px;width:70px;height:65px;border:1.5px solid #e4e4e4"></div><div style="position:absolute;left:480px;top:228px;width:120px;height:1.5px;background:#d0d0d0"></div><div style="position:absolute;left:500px;top:229.4px;font-size:11px;line-height:11px;color:#7c7c7c;white-space:nowrap;font-weight:bold;">150</div><div style="position:absolute;left:530px;top:299.4px;font-size:11px;line-height:11px;color:#7c7c7c;white-space:nowrap;font-weight:bold;">48</div><div style="position:absolute;left:484px;top:332.9px;font-size:13.5px;line-height:13.5px;color:#7c7c7c;white-space:nowrap;font-weight:bold;">Jay can &nbsp; &nbsp; &nbsp; &nbsp; &nbsp; of the concert goers</div><div style="position:absolute;left:484px;top:359.9px;font-size:13.5px;line-height:13.5px;color:#7c7c7c;white-space:nowrap;font-weight:bold;">bought a shirt.</div><div style="position:absolute;left:548px;top:328px;width:40px;height:26px;border:1.5px solid #ddd"></div><div style="position:absolute;left:106px;top:442px;width:332px;height:159px;background:#ececec;border:2px solid #999;box-sizing:border-box"><div style="position:absolute;left:9px;top:72px;font-size:19px;line-height:22px;color:#555;white-space:nowrap;font-weight:bold;letter-spacing:0.5px">DON’T HAVE TO DO</div></div><div style="position:absolute;left:453px;top:452px;width:334px;height:155px;background:#ececec;border:2px solid #999;box-sizing:border-box"><div style="position:absolute;left:9px;top:67px;font-size:19px;line-height:22px;color:#555;white-space:nowrap;font-weight:bold;letter-spacing:0.5px">DON’T HAVE TO DO</div></div><div style="position:absolute;left:118px;top:699.9px;font-size:13.5px;line-height:13.5px;color:#7c7c7c;white-space:nowrap;font-weight:bold;">3.</div><div style="position:absolute;left:134px;top:699.9px;font-size:13.5px;line-height:13.5px;color:#7c7c7c;white-space:nowrap;font-weight:bold;">Daniel finished the race in 45 minutes. It</div><div style="position:absolute;left:134px;top:717.5px;font-size:13.5px;line-height:13.5px;color:#7c7c7c;white-space:nowrap;font-weight:bold;">took him 20% less time than it took his</div><div style="position:absolute;left:134px;top:736.6px;font-size:13.5px;line-height:13.5px;color:#7c7c7c;white-space:nowrap;font-weight:bold;">friend.</div><div style="position:absolute;left:134px;top:760.9px;font-size:13.5px;line-height:13.5px;color:#7c7c7c;white-space:nowrap;font-weight:bold;">If his friend went 20% farther, how long</div><div style="position:absolute;left:134px;top:779.9px;font-size:13.5px;line-height:13.5px;color:#7c7c7c;white-space:nowrap;font-weight:bold;">did it take his friend to finish the race?</div><div style="position:absolute;left:94px;top:807px;width:333px;height:39px;background:#fff;border:1.5px solid #ddd;box-sizing:border-box"></div><div style="position:absolute;left:466px;top:699.9px;font-size:13.5px;line-height:13.5px;color:#7c7c7c;white-space:nowrap;font-weight:bold;">4.</div><div style="position:absolute;left:482px;top:699.9px;font-size:13.5px;line-height:13.5px;color:#7c7c7c;white-space:nowrap;font-weight:bold;">A school buys a math workbook for</div><div style="position:absolute;left:482px;top:717.5px;font-size:13.5px;line-height:13.5px;color:#7c7c7c;white-space:nowrap;font-weight:bold;">students. Of the students, there are a</div><div style="position:absolute;left:482px;top:736.6px;font-size:13.5px;line-height:13.5px;color:#7c7c7c;white-space:nowrap;font-weight:bold;">total number of 1,200.</div><div style="position:absolute;left:497px;top:760.9px;font-size:13.5px;line-height:13.5px;color:#7c7c7c;white-space:nowrap;font-weight:bold;">a. How many students will get a</div><div style="position:absolute;left:497px;top:779.9px;font-size:13.5px;line-height:13.5px;color:#7c7c7c;white-space:nowrap;font-weight:bold;">workbook?</div><div style="position:absolute;left:453px;top:797px;width:334px;height:39px;background:#fff;border:1.5px solid #ddd;box-sizing:border-box"></div><div style="position:absolute;left:497px;top:831.5px;font-size:13.5px;line-height:13.5px;color:#7c7c7c;white-space:nowrap;font-weight:bold;">b. What percent of students did</div><div style="position:absolute;left:497px;top:849.9px;font-size:13.5px;line-height:13.5px;color:#7c7c7c;white-space:nowrap;font-weight:bold;">not receive a workbook?</div><div style="position:absolute;left:453px;top:882px;width:334px;height:39px;background:#fff;border:1.5px solid #ddd;box-sizing:border-box"></div><svg style="position:absolute;left:0;top:0" width="815" height="1054"><polygon points="783,8 812,8 812,1054 796,1054" fill="#a5a5a5"/></svg><div style="position:absolute;left:0;top:980px;width:815px;height:74px;background:linear-gradient(180deg,rgba(230,230,230,0),#e2e2e2)"></div><div style="position:absolute;left:498px;top:1031px;font-size:14px;line-height:16px;color:#777;white-space:nowrap"><b>3-2</b> &nbsp;Connect Percents and Proportions &nbsp; <b>35</b></div></div></div>
<!-- /THUMBS -->

<!-- canvas -->
<div id="canvas" class="a"></div>
<div id="hruler" class="a"></div>
<div id="vruler" class="a"></div>
<div class="a" style="left:219px;top:143px;width:15px;height:13px;background:#fff;border-right:1px solid #dadce0;border-bottom:1px solid #dadce0"></div>
<div class="a" style="left:394px;top:143px;width:815px;height:13px;background:#fff;border-bottom:1px solid #dadce0"></div>
<svg style="left:0;top:0" width="1366" height="768"><rect x="405" y="148" width="1" height="4" fill="#c8cacd"/><rect x="417" y="148" width="1" height="4" fill="#c8cacd"/><rect x="429" y="148" width="1" height="4" fill="#c8cacd"/><rect x="441" y="146" width="1" height="7" fill="#b4b7bb"/><rect x="453" y="148" width="1" height="4" fill="#c8cacd"/><rect x="465" y="148" width="1" height="4" fill="#c8cacd"/><rect x="477" y="148" width="1" height="4" fill="#c8cacd"/><text x="489.5" y="153" font-family="Liberation Sans" font-size="10" fill="#4a4d51" text-anchor="middle">1</text><rect x="501" y="148" width="1" height="4" fill="#c8cacd"/><rect x="513" y="148" width="1" height="4" fill="#c8cacd"/><rect x="525" y="148" width="1" height="4" fill="#c8cacd"/><rect x="537" y="146" width="1" height="7" fill="#b4b7bb"/><rect x="549" y="148" width="1" height="4" fill="#c8cacd"/><rect x="561" y="148" width="1" height="4" fill="#c8cacd"/><rect x="573" y="148" width="1" height="4" fill="#c8cacd"/><text x="585.5" y="153" font-family="Liberation Sans" font-size="10" fill="#4a4d51" text-anchor="middle">2</text><rect x="597" y="148" width="1" height="4" fill="#c8cacd"/><rect x="609" y="148" width="1" height="4" fill="#c8cacd"/><rect x="621" y="148" width="1" height="4" fill="#c8cacd"/><rect x="633" y="146" width="1" height="7" fill="#b4b7bb"/><rect x="645" y="148" width="1" height="4" fill="#c8cacd"/><rect x="657" y="148" width="1" height="4" fill="#c8cacd"/><rect x="669" y="148" width="1" height="4" fill="#c8cacd"/><text x="681.5" y="153" font-family="Liberation Sans" font-size="10" fill="#4a4d51" text-anchor="middle">3</text><rect x="693" y="148" width="1" height="4" fill="#c8cacd"/><rect x="705" y="148" width="1" height="4" fill="#c8cacd"/><rect x="717" y="148" width="1" height="4" fill="#c8cacd"/><rect x="729" y="146" width="1" height="7" fill="#b4b7bb"/><rect x="741" y="148" width="1" height="4" fill="#c8cacd"/><rect x="753" y="148" width="1" height="4" fill="#c8cacd"/><rect x="765" y="148" width="1" height="4" fill="#c8cacd"/><text x="777.5" y="153" font-family="Liberation Sans" font-size="10" fill="#4a4d51" text-anchor="middle">4</text><rect x="789" y="148" width="1" height="4" fill="#c8cacd"/><rect x="801" y="148" width="1" height="4" fill="#c8cacd"/><rect x="813" y="148" width="1" height="4" fill="#c8cacd"/><rect x="825" y="146" width="1" height="7" fill="#b4b7bb"/><rect x="837" y="148" width="1" height="4" fill="#c8cacd"/><rect x="849" y="148" width="1" height="4" fill="#c8cacd"/><rect x="861" y="148" width="1" height="4" fill="#c8cacd"/><text x="873.5" y="153" font-family="Liberation Sans" font-size="10" fill="#4a4d51" text-anchor="middle">5</text><rect x="885" y="148" width="1" height="4" fill="#c8cacd"/><rect x="897" y="148" width="1" height="4" fill="#c8cacd"/><rect x="909" y="148" width="1" height="4" fill="#c8cacd"/><rect x="921" y="146" width="1" height="7" fill="#b4b7bb"/><rect x="933" y="148" width="1" height="4" fill="#c8cacd"/><rect x="945" y="148" width="1" height="4" fill="#c8cacd"/><rect x="957" y="148" width="1" height="4" fill="#c8cacd"/><text x="969.5" y="153" font-family="Liberation Sans" font-size="10" fill="#4a4d51" text-anchor="middle">6</text><rect x="981" y="148" width="1" height="4" fill="#c8cacd"/><rect x="993" y="148" width="1" height="4" fill="#c8cacd"/><rect x="1005" y="148" width="1" height="4" fill="#c8cacd"/><rect x="1017" y="146" width="1" height="7" fill="#b4b7bb"/><rect x="1029" y="148" width="1" height="4" fill="#c8cacd"/><rect x="1041" y="148" width="1" height="4" fill="#c8cacd"/><rect x="1053" y="148" width="1" height="4" fill="#c8cacd"/><text x="1065.5" y="153" font-family="Liberation Sans" font-size="10" fill="#4a4d51" text-anchor="middle">7</text><rect x="1077" y="148" width="1" height="4" fill="#c8cacd"/><rect x="1089" y="148" width="1" height="4" fill="#c8cacd"/><rect x="1101" y="148" width="1" height="4" fill="#c8cacd"/><rect x="1113" y="146" width="1" height="7" fill="#b4b7bb"/><rect x="1125" y="148" width="1" height="4" fill="#c8cacd"/><rect x="1137" y="148" width="1" height="4" fill="#c8cacd"/><rect x="1149" y="148" width="1" height="4" fill="#c8cacd"/><text x="1161.5" y="153" font-family="Liberation Sans" font-size="10" fill="#4a4d51" text-anchor="middle">8</text><rect x="1173" y="148" width="1" height="4" fill="#c8cacd"/><rect x="1185" y="148" width="1" height="4" fill="#c8cacd"/><rect x="1197" y="148" width="1" height="4" fill="#c8cacd"/><rect x="225" y="162" width="4" height="1" fill="#c8cacd"/><rect x="225" y="174" width="4" height="1" fill="#c8cacd"/><rect x="225" y="186" width="4" height="1" fill="#c8cacd"/><rect x="222" y="198" width="8" height="1" fill="#b4b7bb"/><rect x="225" y="210" width="4" height="1" fill="#c8cacd"/><rect x="225" y="222" width="4" height="1" fill="#c8cacd"/><rect x="225" y="234" width="4" height="1" fill="#c8cacd"/><text x="0" y="0" font-family="Liberation Sans" font-size="10" fill="#4a4d51" text-anchor="middle" transform="translate(230,246.5) rotate(-90)">7</text><rect x="225" y="258" width="4" height="1" fill="#c8cacd"/><rect x="225" y="270" width="4" height="1" fill="#c8cacd"/><rect x="225" y="282" width="4" height="1" fill="#c8cacd"/><rect x="222" y="294" width="8" height="1" fill="#b4b7bb"/><rect x="225" y="306" width="4" height="1" fill="#c8cacd"/><rect x="225" y="318" width="4" height="1" fill="#c8cacd"/><rect x="225" y="330" width="4" height="1" fill="#c8cacd"/><text x="0" y="0" font-family="Liberation Sans" font-size="10" fill="#4a4d51" text-anchor="middle" transform="translate(230,342.5) rotate(-90)">8</text><rect x="225" y="354" width="4" height="1" fill="#c8cacd"/><rect x="225" y="366" width="4" height="1" fill="#c8cacd"/><rect x="225" y="378" width="4" height="1" fill="#c8cacd"/><rect x="222" y="390" width="8" height="1" fill="#b4b7bb"/><rect x="225" y="402" width="4" height="1" fill="#c8cacd"/><rect x="225" y="414" width="4" height="1" fill="#c8cacd"/><rect x="225" y="426" width="4" height="1" fill="#c8cacd"/><text x="0" y="0" font-family="Liberation Sans" font-size="10" fill="#4a4d51" text-anchor="middle" transform="translate(230,438.5) rotate(-90)">9</text><rect x="225" y="450" width="4" height="1" fill="#c8cacd"/><rect x="225" y="462" width="4" height="1" fill="#c8cacd"/><rect x="225" y="474" width="4" height="1" fill="#c8cacd"/><rect x="222" y="486" width="8" height="1" fill="#b4b7bb"/><rect x="225" y="498" width="4" height="1" fill="#c8cacd"/><rect x="225" y="510" width="4" height="1" fill="#c8cacd"/><rect x="225" y="522" width="4" height="1" fill="#c8cacd"/><text x="0" y="0" font-family="Liberation Sans" font-size="10" fill="#4a4d51" text-anchor="middle" transform="translate(230,534.5) rotate(-90)">10</text><rect x="225" y="546" width="4" height="1" fill="#c8cacd"/><rect x="225" y="558" width="4" height="1" fill="#c8cacd"/><rect x="225" y="570" width="4" height="1" fill="#c8cacd"/><rect x="222" y="582" width="8" height="1" fill="#b4b7bb"/><rect x="225" y="594" width="4" height="1" fill="#c8cacd"/><rect x="225" y="606" width="4" height="1" fill="#c8cacd"/><rect x="225" y="618" width="4" height="1" fill="#c8cacd"/></svg>
<!-- SLIDE -->
<div class="a" style="left:394px;top:156px;width:815px;height:474px;background:linear-gradient(180deg,#fff 0,#fff 418px,#f7f7f7 445px,#e6e6e6 474px)"></div>
<div class="a" style="left:393px;top:156px;width:2px;height:474px;background:#3a3a3a"></div>
<svg style="left:0;top:0" width="1366" height="768"><polygon points="1184,156 1209,156 1209,630 1190,630" fill="#a5a5a5"/></svg>
<svg style="left:0;top:0" width="1366" height="768"><rect x="506.0" y="169.5" width="2" height="2" fill="#e0e0e0"/><rect x="514.4" y="169.5" width="2" height="2" fill="#e0e0e0"/><rect x="522.7" y="169.5" width="2" height="2" fill="#e0e0e0"/><rect x="531.1" y="169.5" width="2" height="2" fill="#e0e0e0"/><rect x="539.4" y="169.5" width="2" height="2" fill="#e0e0e0"/><rect x="547.8" y="169.5" width="2" height="2" fill="#e0e0e0"/><rect x="556.1" y="169.5" width="2" height="2" fill="#e0e0e0"/><rect x="564.5" y="169.5" width="2" height="2" fill="#e0e0e0"/><rect x="572.8" y="169.5" width="2" height="2" fill="#e0e0e0"/><rect x="581.2" y="169.5" width="2" height="2" fill="#e0e0e0"/><rect x="589.5" y="169.5" width="2" height="2" fill="#e0e0e0"/><rect x="597.9" y="169.5" width="2" height="2" fill="#e0e0e0"/><rect x="606.2" y="169.5" width="2" height="2" fill="#e0e0e0"/><rect x="614.6" y="169.5" width="2" height="2" fill="#e0e0e0"/><rect x="622.9" y="169.5" width="2" height="2" fill="#e0e0e0"/><rect x="631.3" y="169.5" width="2" height="2" fill="#e0e0e0"/><rect x="639.6" y="169.5" width="2" height="2" fill="#e0e0e0"/><rect x="648.0" y="169.5" width="2" height="2" fill="#e0e0e0"/><rect x="656.3" y="169.5" width="2" height="2" fill="#e0e0e0"/><rect x="664.7" y="169.5" width="2" height="2" fill="#e0e0e0"/><rect x="673.0" y="169.5" width="2" height="2" fill="#e0e0e0"/><rect x="681.4" y="169.5" width="2" height="2" fill="#e0e0e0"/><rect x="689.7" y="169.5" width="2" height="2" fill="#e0e0e0"/><rect x="698.1" y="169.5" width="2" height="2" fill="#e0e0e0"/><rect x="706.4" y="169.5" width="2" height="2" fill="#e0e0e0"/><rect x="714.8" y="169.5" width="2" height="2" fill="#e0e0e0"/><rect x="723.1" y="169.5" width="2" height="2" fill="#e0e0e0"/><rect x="731.5" y="169.5" width="2" height="2" fill="#e0e0e0"/><rect x="739.8" y="169.5" width="2" height="2" fill="#e0e0e0"/><rect x="748.2" y="169.5" width="2" height="2" fill="#e0e0e0"/><rect x="756.5" y="169.5" width="2" height="2" fill="#e0e0e0"/><rect x="764.9" y="169.5" width="2" height="2" fill="#e0e0e0"/><rect x="773.2" y="169.5" width="2" height="2" fill="#e0e0e0"/><rect x="781.6" y="169.5" width="2" height="2" fill="#e0e0e0"/><rect x="789.9" y="169.5" width="2" height="2" fill="#e0e0e0"/><rect x="798.3" y="169.5" width="2" height="2" fill="#e0e0e0"/><rect x="806.6" y="169.5" width="2" height="2" fill="#e0e0e0"/><rect x="815.0" y="169.5" width="2" height="2" fill="#e0e0e0"/><rect x="823.3" y="169.5" width="2" height="2" fill="#e0e0e0"/><rect x="831.7" y="169.5" width="2" height="2" fill="#e0e0e0"/><rect x="840.0" y="169.5" width="2" height="2" fill="#e0e0e0"/><rect x="848.4" y="169.5" width="2" height="2" fill="#e0e0e0"/><rect x="856.7" y="169.5" width="2" height="2" fill="#e0e0e0"/><rect x="865.1" y="169.5" width="2" height="2" fill="#e0e0e0"/><rect x="873.4" y="169.5" width="2" height="2" fill="#e0e0e0"/><rect x="881.8" y="169.5" width="2" height="2" fill="#e0e0e0"/><rect x="890.1" y="169.5" width="2" height="2" fill="#e0e0e0"/><rect x="898.5" y="169.5" width="2" height="2" fill="#e0e0e0"/><rect x="906.8" y="169.5" width="2" height="2" fill="#e0e0e0"/><rect x="915.2" y="169.5" width="2" height="2" fill="#e0e0e0"/><rect x="923.5" y="169.5" width="2" height="2" fill="#e0e0e0"/><rect x="931.9" y="169.5" width="2" height="2" fill="#e0e0e0"/><rect x="940.2" y="169.5" width="2" height="2" fill="#e0e0e0"/><rect x="948.6" y="169.5" width="2" height="2" fill="#e0e0e0"/><rect x="956.9" y="169.5" width="2" height="2" fill="#e0e0e0"/><rect x="965.3" y="169.5" width="2" height="2" fill="#e0e0e0"/><rect x="973.6" y="169.5" width="2" height="2" fill="#e0e0e0"/><rect x="982.0" y="169.5" width="2" height="2" fill="#e0e0e0"/><rect x="990.3" y="169.5" width="2" height="2" fill="#e0e0e0"/><rect x="998.7" y="169.5" width="2" height="2" fill="#e0e0e0"/><rect x="1007.0" y="169.5" width="2" height="2" fill="#e0e0e0"/><rect x="1015.4" y="169.5" width="2" height="2" fill="#e0e0e0"/><rect x="1023.7" y="169.5" width="2" height="2" fill="#e0e0e0"/><rect x="1032.1" y="169.5" width="2" height="2" fill="#e0e0e0"/><rect x="1040.4" y="169.5" width="2" height="2" fill="#e0e0e0"/><rect x="1048.8" y="169.5" width="2" height="2" fill="#e0e0e0"/><rect x="1057.1" y="169.5" width="2" height="2" fill="#e0e0e0"/><rect x="1065.5" y="169.5" width="2" height="2" fill="#e0e0e0"/><rect x="1073.8" y="169.5" width="2" height="2" fill="#e0e0e0"/><rect x="1082.2" y="169.5" width="2" height="2" fill="#e0e0e0"/><rect x="1090.5" y="169.5" width="2" height="2" fill="#e0e0e0"/><rect x="1098.9" y="169.5" width="2" height="2" fill="#e0e0e0"/><rect x="1107.2" y="169.5" width="2" height="2" fill="#e0e0e0"/><rect x="1115.6" y="169.5" width="2" height="2" fill="#e0e0e0"/><rect x="1123.9" y="169.5" width="2" height="2" fill="#e0e0e0"/><rect x="1132.3" y="169.5" width="2" height="2" fill="#e0e0e0"/><rect x="1140.6" y="169.5" width="2" height="2" fill="#e0e0e0"/><rect x="1149.0" y="169.5" width="2" height="2" fill="#e0e0e0"/><rect x="1157.3" y="169.5" width="2" height="2" fill="#e0e0e0"/><rect x="506.0" y="387.5" width="2" height="2" fill="#e0e0e0"/><rect x="514.4" y="387.5" width="2" height="2" fill="#e0e0e0"/><rect x="522.7" y="387.5" width="2" height="2" fill="#e0e0e0"/><rect x="531.1" y="387.5" width="2" height="2" fill="#e0e0e0"/><rect x="539.4" y="387.5" width="2" height="2" fill="#e0e0e0"/><rect x="547.8" y="387.5" width="2" height="2" fill="#e0e0e0"/><rect x="556.1" y="387.5" width="2" height="2" fill="#e0e0e0"/><rect x="564.5" y="387.5" width="2" height="2" fill="#e0e0e0"/><rect x="572.8" y="387.5" width="2" height="2" fill="#e0e0e0"/><rect x="581.2" y="387.5" width="2" height="2" fill="#e0e0e0"/><rect x="589.5" y="387.5" width="2" height="2" fill="#e0e0e0"/><rect x="597.9" y="387.5" width="2" height="2" fill="#e0e0e0"/><rect x="606.2" y="387.5" width="2" height="2" fill="#e0e0e0"/><rect x="614.6" y="387.5" width="2" height="2" fill="#e0e0e0"/><rect x="622.9" y="387.5" width="2" height="2" fill="#e0e0e0"/><rect x="631.3" y="387.5" width="2" height="2" fill="#e0e0e0"/><rect x="639.6" y="387.5" width="2" height="2" fill="#e0e0e0"/><rect x="648.0" y="387.5" width="2" height="2" fill="#e0e0e0"/><rect x="656.3" y="387.5" width="2" height="2" fill="#e0e0e0"/><rect x="664.7" y="387.5" width="2" height="2" fill="#e0e0e0"/><rect x="673.0" y="387.5" width="2" height="2" fill="#e0e0e0"/><rect x="681.4" y="387.5" width="2" height="2" fill="#e0e0e0"/><rect x="689.7" y="387.5" width="2" height="2" fill="#e0e0e0"/><rect x="698.1" y="387.5" width="2" height="2" fill="#e0e0e0"/><rect x="706.4" y="387.5" width="2" height="2" fill="#e0e0e0"/><rect x="714.8" y="387.5" width="2" height="2" fill="#e0e0e0"/><rect x="723.1" y="387.5" width="2" height="2" fill="#e0e0e0"/><rect x="731.5" y="387.5" width="2" height="2" fill="#e0e0e0"/><rect x="739.8" y="387.5" width="2" height="2" fill="#e0e0e0"/><rect x="748.2" y="387.5" width="2" height="2" fill="#e0e0e0"/><rect x="756.5" y="387.5" width="2" height="2" fill="#e0e0e0"/><rect x="764.9" y="387.5" width="2" height="2" fill="#e0e0e0"/><rect x="773.2" y="387.5" width="2" height="2" fill="#e0e0e0"/><rect x="781.6" y="387.5" width="2" height="2" fill="#e0e0e0"/><rect x="789.9" y="387.5" width="2" height="2" fill="#e0e0e0"/><rect x="798.3" y="387.5" width="2" height="2" fill="#e0e0e0"/><rect x="806.6" y="387.5" width="2" height="2" fill="#e0e0e0"/><rect x="815.0" y="387.5" width="2" height="2" fill="#e0e0e0"/><rect x="823.3" y="387.5" width="2" height="2" fill="#e0e0e0"/><rect x="831.7" y="387.5" width="2" height="2" fill="#e0e0e0"/><rect x="840.0" y="387.5" width="2" height="2" fill="#e0e0e0"/><rect x="848.4" y="387.5" width="2" height="2" fill="#e0e0e0"/><rect x="856.7" y="387.5" width="2" height="2" fill="#e0e0e0"/><rect x="865.1" y="387.5" width="2" height="2" fill="#e0e0e0"/><rect x="873.4" y="387.5" width="2" height="2" fill="#e0e0e0"/><rect x="881.8" y="387.5" width="2" height="2" fill="#e0e0e0"/><rect x="890.1" y="387.5" width="2" height="2" fill="#e0e0e0"/><rect x="898.5" y="387.5" width="2" height="2" fill="#e0e0e0"/><rect x="906.8" y="387.5" width="2" height="2" fill="#e0e0e0"/><rect x="915.2" y="387.5" width="2" height="2" fill="#e0e0e0"/><rect x="923.5" y="387.5" width="2" height="2" fill="#e0e0e0"/><rect x="931.9" y="387.5" width="2" height="2" fill="#e0e0e0"/><rect x="940.2" y="387.5" width="2" height="2" fill="#e0e0e0"/><rect x="948.6" y="387.5" width="2" height="2" fill="#e0e0e0"/><rect x="956.9" y="387.5" width="2" height="2" fill="#e0e0e0"/><rect x="965.3" y="387.5" width="2" height="2" fill="#e0e0e0"/><rect x="973.6" y="387.5" width="2" height="2" fill="#e0e0e0"/><rect x="982.0" y="387.5" width="2" height="2" fill="#e0e0e0"/><rect x="990.3" y="387.5" width="2" height="2" fill="#e0e0e0"/><rect x="998.7" y="387.5" width="2" height="2" fill="#e0e0e0"/><rect x="1007.0" y="387.5" width="2" height="2" fill="#e0e0e0"/><rect x="1015.4" y="387.5" width="2" height="2" fill="#e0e0e0"/><rect x="1023.7" y="387.5" width="2" height="2" fill="#e0e0e0"/><rect x="1032.1" y="387.5" width="2" height="2" fill="#e0e0e0"/><rect x="1040.4" y="387.5" width="2" height="2" fill="#e0e0e0"/><rect x="1048.8" y="387.5" width="2" height="2" fill="#e0e0e0"/><rect x="1057.1" y="387.5" width="2" height="2" fill="#e0e0e0"/><rect x="1065.5" y="387.5" width="2" height="2" fill="#e0e0e0"/><rect x="1073.8" y="387.5" width="2" height="2" fill="#e0e0e0"/><rect x="1082.2" y="387.5" width="2" height="2" fill="#e0e0e0"/><rect x="1090.5" y="387.5" width="2" height="2" fill="#e0e0e0"/><rect x="1098.9" y="387.5" width="2" height="2" fill="#e0e0e0"/><rect x="1107.2" y="387.5" width="2" height="2" fill="#e0e0e0"/><rect x="1115.6" y="387.5" width="2" height="2" fill="#e0e0e0"/><rect x="1123.9" y="387.5" width="2" height="2" fill="#e0e0e0"/><rect x="1132.3" y="387.5" width="2" height="2" fill="#e0e0e0"/><rect x="1140.6" y="387.5" width="2" height="2" fill="#e0e0e0"/><rect x="1149.0" y="387.5" width="2" height="2" fill="#e0e0e0"/><rect x="1157.3" y="387.5" width="2" height="2" fill="#e0e0e0"/><rect x="831.5" y="161.5" width="2" height="2" fill="#e0e0e0"/><rect x="831.5" y="169.9" width="2" height="2" fill="#e0e0e0"/><rect x="831.5" y="178.3" width="2" height="2" fill="#e0e0e0"/><rect x="831.5" y="186.7" width="2" height="2" fill="#e0e0e0"/><rect x="831.5" y="195.1" width="2" height="2" fill="#e0e0e0"/><rect x="831.5" y="203.5" width="2" height="2" fill="#e0e0e0"/><rect x="831.5" y="211.9" width="2" height="2" fill="#e0e0e0"/><rect x="831.5" y="220.3" width="2" height="2" fill="#e0e0e0"/><rect x="831.5" y="228.7" width="2" height="2" fill="#e0e0e0"/><rect x="831.5" y="237.1" width="2" height="2" fill="#e0e0e0"/><rect x="831.5" y="245.5" width="2" height="2" fill="#e0e0e0"/><rect x="831.5" y="253.9" width="2" height="2" fill="#e0e0e0"/><rect x="831.5" y="262.3" width="2" height="2" fill="#e0e0e0"/><rect x="831.5" y="270.7" width="2" height="2" fill="#e0e0e0"/><rect x="831.5" y="279.1" width="2" height="2" fill="#e0e0e0"/><rect x="831.5" y="287.5" width="2" height="2" fill="#e0e0e0"/><rect x="831.5" y="295.9" width="2" height="2" fill="#e0e0e0"/><rect x="831.5" y="304.3" width="2" height="2" fill="#e0e0e0"/><rect x="831.5" y="312.7" width="2" height="2" fill="#e0e0e0"/><rect x="831.5" y="321.1" width="2" height="2" fill="#e0e0e0"/><rect x="831.5" y="329.5" width="2" height="2" fill="#e0e0e0"/><rect x="831.5" y="337.9" width="2" height="2" fill="#e0e0e0"/><rect x="831.5" y="346.3" width="2" height="2" fill="#e0e0e0"/><rect x="831.5" y="354.7" width="2" height="2" fill="#e0e0e0"/><rect x="831.5" y="363.1" width="2" height="2" fill="#e0e0e0"/><rect x="831.5" y="371.5" width="2" height="2" fill="#e0e0e0"/><rect x="831.5" y="379.9" width="2" height="2" fill="#e0e0e0"/><rect x="831.5" y="388.3" width="2" height="2" fill="#e0e0e0"/><rect x="831.5" y="396.7" width="2" height="2" fill="#e0e0e0"/><rect x="831.5" y="405.1" width="2" height="2" fill="#e0e0e0"/><rect x="831.5" y="413.5" width="2" height="2" fill="#e0e0e0"/><rect x="831.5" y="421.9" width="2" height="2" fill="#e0e0e0"/><rect x="831.5" y="430.3" width="2" height="2" fill="#e0e0e0"/><rect x="831.5" y="438.7" width="2" height="2" fill="#e0e0e0"/><rect x="831.5" y="447.1" width="2" height="2" fill="#e0e0e0"/><rect x="831.5" y="455.5" width="2" height="2" fill="#e0e0e0"/><rect x="831.5" y="463.9" width="2" height="2" fill="#e0e0e0"/><rect x="831.5" y="472.3" width="2" height="2" fill="#e0e0e0"/><rect x="831.5" y="480.7" width="2" height="2" fill="#e0e0e0"/><rect x="831.5" y="489.1" width="2" height="2" fill="#e0e0e0"/><rect x="831.5" y="497.5" width="2" height="2" fill="#e0e0e0"/><rect x="831.5" y="505.9" width="2" height="2" fill="#e0e0e0"/><rect x="831.5" y="514.3" width="2" height="2" fill="#e0e0e0"/><rect x="831.5" y="522.7" width="2" height="2" fill="#e0e0e0"/><rect x="831.5" y="531.1" width="2" height="2" fill="#e0e0e0"/><rect x="831.5" y="539.5" width="2" height="2" fill="#e0e0e0"/><rect x="831.5" y="547.9" width="2" height="2" fill="#e0e0e0"/><rect x="831.5" y="556.3" width="2" height="2" fill="#e0e0e0"/><rect x="831.5" y="564.7" width="2" height="2" fill="#e0e0e0"/><rect x="831.5" y="573.1" width="2" height="2" fill="#e0e0e0"/><rect x="831.5" y="581.5" width="2" height="2" fill="#e0e0e0"/><rect x="831.5" y="589.9" width="2" height="2" fill="#e0e0e0"/></svg>
<div class="a" style="left:514px;top:181.6px;font-size:14.6px;font-weight:bold;color:#4a4a4a;line-height:16px">5.</div>
<div class="a sl" style="left:531.5px;top:181.6px;transform:scaleX(0.9885)">The number of students in the marching</div>
<div class="a sl" style="left:531.5px;top:199.3px;transform:scaleX(0.9495)">band this year is 125% as many as the</div>
<div class="a sl" style="left:531.5px;top:216.8px;transform:scaleX(0.9951)">number of students in the marching band</div>
<div class="a sl" style="left:531.5px;top:234.7px;transform:scaleX(0.9763)">last year. If there were 36 students in the</div>
<div class="a sl" style="left:531.5px;top:252.7px;transform:scaleX(0.9765)">marching band last year, how many students</div>
<div class="a sl" style="left:531.5px;top:270.2px;transform:scaleX(0.9835)">are in the marching band this year?</div>
<div class="a" style="left:492px;top:293px;width:338px;height:42px;border:1px solid #a3a3a3;background:#fff"></div>
<div class="dhtd" style="left:842px;top:174px;width:333px;height:198px"><span style="top:99px">DON’T HAVE TO DO</span></div>
<div class="dhtd" style="left:492px;top:392.5px;width:332px;height:133px"><span style="top:66.5px">DON’T HAVE TO DO</span></div>
<div class="dhtd" style="left:851px;top:392.5px;width:332px;height:133px"><span style="top:66.5px">DON’T HAVE TO DO</span></div>
<div class="a" style="left:910.5px;top:606.5px;font-size:14.2px;color:#333;white-space:nowrap;line-height:16px"><b>3-1</b></div>
<div class="a" style="left:939.5px;top:606.5px;font-size:14.2px;color:#3a3a3a;white-space:nowrap;line-height:16px;transform:scaleX(1.0);transform-origin:left">Analyze Percents of Numbers</div>
<div class="a" style="left:1141.5px;top:606.5px;font-size:14.2px;color:#333;white-space:nowrap;line-height:16px"><b>33</b></div>
<div id="notesline" class="a"></div>
<div id="notes" class="a">Click to add speaker notes</div>

<!-- SCROLL + NOTES -->
<div class="a" style="left:1354px;top:421px;width:8px;height:198px;border-radius:4px;background:#dadce0"></div>
<div class="a" style="left:220px;top:630px;width:1146px;height:1px;background:#e3e3e3"></div>
<div class="a" style="left:220px;top:631px;width:1146px;height:8px;background:#fff"></div>
<svg style="left:782px;top:633px" width="22" height="4"><circle cx="3" cy="2" r="1.3" fill="#bdc1c6"/><circle cx="11" cy="2" r="1.3" fill="#bdc1c6"/><circle cx="19" cy="2" r="1.3" fill="#bdc1c6"/></svg>
<div class="a" style="left:1312px;top:675px;width:38px;height:38px;border:1px solid #dadce0;border-radius:3px;background:#fff;box-shadow:0 1px 2px rgba(0,0,0,.08)"></div>
<svg style="left:1321px;top:684px" width="20" height="20"><path d="M2 1 L18 1 Q19 1 19 2 L19 16 Q19 17 18 17 L12 17 L10 19.5 L8 17 L2 17 Q1 17 1 16 L1 2 Q1 1 2 1Z" fill="#5f6368"/><path d="M10 3.5 Q10.8 8.2 15.5 9 Q10.8 9.8 10 14.5 Q9.2 9.8 4.5 9 Q9.2 8.2 10 3.5Z" fill="#fff"/></svg>
<!-- filmstrip bottom -->
<div class="a" style="left:0;top:680px;width:219px;height:1px;background:#dadce0"></div>
<div class="a" style="left:31px;top:680px;width:48px;height:3px;background:#202124"></div>
<svg style="left:46px;top:693px" width="15" height="13"><rect x="0" y="0" width="4.5" height="12.5" fill="#202124"/><rect x="6" y="0" width="8.5" height="5.5" fill="#202124"/><rect x="6" y="7" width="8.5" height="5.5" fill="#202124"/></svg>
<svg style="left:154px;top:693px" width="15" height="14"><g fill="#5f6368"><rect x="0" y="0" width="4" height="3.8"/><rect x="5.3" y="0" width="4" height="3.8"/><rect x="10.6" y="0" width="4" height="3.8"/><rect x="0" y="5" width="4" height="3.8"/><rect x="5.3" y="5" width="4" height="3.8"/><rect x="10.6" y="5" width="4" height="3.8"/><rect x="0" y="10" width="4" height="3.8"/><rect x="5.3" y="10" width="4" height="3.8"/><rect x="10.6" y="10" width="4" height="3.8"/></g></svg>
<!-- SHELF -->
<div id="shelf" class="a"></div>
<div class="a" style="left:6px;top:726px;width:36px;height:36px;border-radius:18px;background:#4a5337"></div>
<div class="a" style="left:16px;top:736px;width:16px;height:16px;border-radius:8px;border:2px solid #fff"></div>
<svg style="left:667px;top:727px" width="34" height="34"><path d="M17 17 L3.14 9 A16 16 0 0 1 30.86 9 Z" fill="#db4437"/><path d="M17 17 L30.86 9 A16 16 0 0 1 17 33 Z" fill="#f4c20d"/><path d="M17 17 L17 33 A16 16 0 0 1 3.14 9 Z" fill="#0f9d58"/><path d="M17 10 L30.86 9 L29 6Z" fill="#db4437"/><circle cx="17" cy="17" r="7.2" fill="#fff"/><circle cx="17" cy="17" r="5.6" fill="#4285f4"/></svg>
<div class="a" style="left:679px;top:763px;width:10px;height:3px;border-radius:1.5px;background:#fff"></div>
<div class="a" style="left:1062px;top:728px;width:83px;height:36px;border-radius:4px;background:#f28b82"></div>
<div class="a" style="left:1062px;top:739px;width:83px;text-align:center;font-size:14.5px;color:#fce8e6;letter-spacing:-0.2px">Sign out</div>
<div class="a" style="left:1154px;top:728px;width:37px;height:36px;border-radius:18px;background:#4a5337"></div>
<svg style="left:1165px;top:736px" width="16" height="20"><rect x="5" y="1" width="6" height="11" rx="3" fill="#eef0e8"/><path d="M2.5 8.5 Q2.5 14.5 8 14.5 Q13.5 14.5 13.5 8.5" stroke="#eef0e8" stroke-width="1.7" fill="none"/><path d="M8 14.5 L8 18.5" stroke="#eef0e8" stroke-width="1.7"/></svg>
<div class="a" style="left:1199px;top:728px;width:161px;height:36px;border-radius:18px;background:#4a5337"></div>
<div class="a" style="left:1211px;top:739px;font-size:14.5px;color:#eef0e8;letter-spacing:-0.5px">EXTD</div>
<svg style="left:1253px;top:738px" width="18" height="18"><circle cx="9" cy="9" r="8.2" fill="#eef0e8"/><text x="9" y="13.5" text-anchor="middle" font-family="Liberation Sans" font-size="12" fill="#3a4328">2</text></svg>
<svg style="left:1277px;top:740px" width="18" height="14"><path d="M0.5 4 Q9 -3 17.5 4 L9 13.5Z" fill="#eef0e8"/></svg>
<svg style="left:1303px;top:737px" width="10" height="18"><rect x="3" y="0.5" width="4" height="2" fill="#eef0e8"/><rect x="0.5" y="2" width="9" height="15.5" rx="1" fill="#eef0e8"/><path d="M5.8 4 L2.8 10 L5 10 L4.2 15 L7.2 8.5 L5 8.5Z" fill="#3a4328"/></svg>
<div class="a" style="left:1319.5px;top:739px;font-size:14.6px;color:#eef0e8">4:16</div>
</body></html>
